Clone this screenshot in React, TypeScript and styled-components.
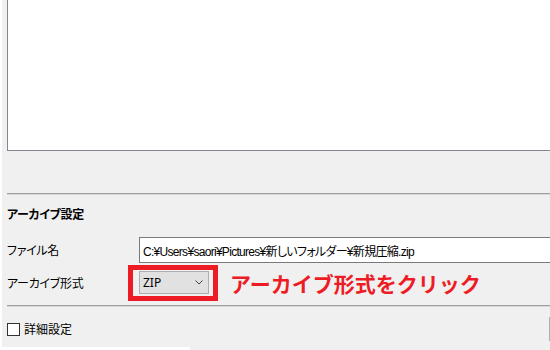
import React from "react";
import styled, { createGlobalStyle } from "styled-components";

const Global = createGlobalStyle`
  html, body { margin: 0; padding: 0; background: #ffffff; overflow: hidden; }
  body { width: 550px; height: 350px; }
  * { box-sizing: border-box; }
`;

const Window = styled.div`
  margin-left: 2px;
  width: 548px;
  height: 347px;
  background: #f0f0f0;
  overflow: hidden;
  font-family: "Noto Sans", "Noto Sans CJK JP", sans-serif;
  font-size: 12px;
  color: #000;
  font-feature-settings: "palt";
`;

const Footer = styled.div`
  display: flex;
  height: 3px;
`;

const FooterWhite = styled.div`
  width: 190px;
  background: #fff;
`;

const FooterGray = styled.div`
  flex: 1;
  background: #f0f0f0;
`;

const ListBox = styled.div`
  margin-left: 5px;
  width: 560px;
  height: 151px;
  background: #ffffff;
  border-left: 1px solid #828790;
  border-bottom: 1px solid #828790;
`;

const Separator = styled.div<{ $top: number }>`
  margin-top: ${(p) => p.$top}px;
  margin-left: 5px;
  width: 560px;
  height: 2px;
  border-top: 1px solid #a0a0a0;
  border-bottom: 1px solid #d8d8d8;
`;

const SectionTitle = styled.div`
  margin: 10px 0 0 5px;
  height: 20px;
  line-height: 20px;
  font-weight: 700;
  letter-spacing: -0.3px;
`;

const Row = styled.div<{ $top: number; $h: number }>`
  display: flex;
  align-items: center;
  margin-top: ${(p) => p.$top}px;
  margin-left: 5px;
  height: ${(p) => p.$h}px;
`;

const Label = styled.div`
  width: 132px;
  flex: none;
  letter-spacing: -0.3px;
`;

const PathInput = styled.div`
  flex: none;
  width: 420px;
  height: 26px;
  background: #fff;
  border: 1px solid #7a7a7a;
  display: flex;
  align-items: center;
  padding-left: 3px;
  white-space: nowrap;
  font-family: "Liberation Sans", "Noto Sans CJK JP", sans-serif;
  letter-spacing: -0.7px;
`;

const ComboWrap = styled.div`
  position: relative;
  flex: none;
`;

const Combo = styled.div`
  width: 70px;
  height: 23px;
  background: #e1e1e1;
  border: 1px solid #adadad;
  display: flex;
  align-items: center;
  justify-content: space-between;
  padding: 0 5px 0 3px;
`;

const Highlight = styled.div`
  position: absolute;
  left: -11px;
  top: -6px;
  width: 90px;
  height: 36px;
  border: 5px solid #ed1c24;
  pointer-events: none;
`;

const Annotation = styled.div`
  margin-left: 21px;
  color: #ed1c24;
  font-family: "Noto Sans CJK JP", sans-serif;
  font-feature-settings: normal;
  font-weight: 700;
  font-size: 21px;
  line-height: 24px;
  white-space: nowrap;
`;

const BottomRow = styled.div`
  display: flex;
  align-items: center;
  justify-content: space-between;
  margin-top: 10px;
  margin-left: 5px;
  height: 24px;
`;

const CheckLabel = styled.label`
  display: flex;
  align-items: center;
  gap: 4px;
`;

const CheckBox = styled.span`
  width: 13px;
  height: 13px;
  background: #fff;
  border: 1px solid #333;
  flex: none;
`;

const EdgeButton = styled.div`
  width: 20px;
  height: 24px;
  margin-right: -19px;
  background: #e1e1e1;
  border: 1px solid #adadad;
`;

export default function App() {
  return (
    <>
      <Global />
      <Window>
        <ListBox />
        <Separator $top={42} />
        <SectionTitle>アーカイブ設定</SectionTitle>
        <Row $top={12} $h={26}>
          <Label>ファイル名</Label>
          <PathInput>C:¥Users¥saori¥Pictures¥新しいフォルダー¥新規圧縮.zip</PathInput>
        </Row>
        <Row $top={8} $h={23}>
          <Label>アーカイブ形式</Label>
          <ComboWrap>
            <Combo>
              <span>ZIP</span>
              <svg width="8" height="5" viewBox="0 0 8 5">
                <path d="M0.5 0.5 L4 4 L7.5 0.5" fill="none" stroke="#444" strokeWidth="1" />
              </svg>
            </Combo>
            <Highlight />
          </ComboWrap>
          <Annotation>アーカイブ形式をクリック</Annotation>
        </Row>
        <Separator $top={11} />
        <BottomRow>
          <CheckLabel>
            <CheckBox />
            <span>詳細設定</span>
          </CheckLabel>
          <EdgeButton />
        </BottomRow>
      </Window>
      <Footer>
        <FooterWhite />
        <FooterGray />
      </Footer>
    </>
  );
}
